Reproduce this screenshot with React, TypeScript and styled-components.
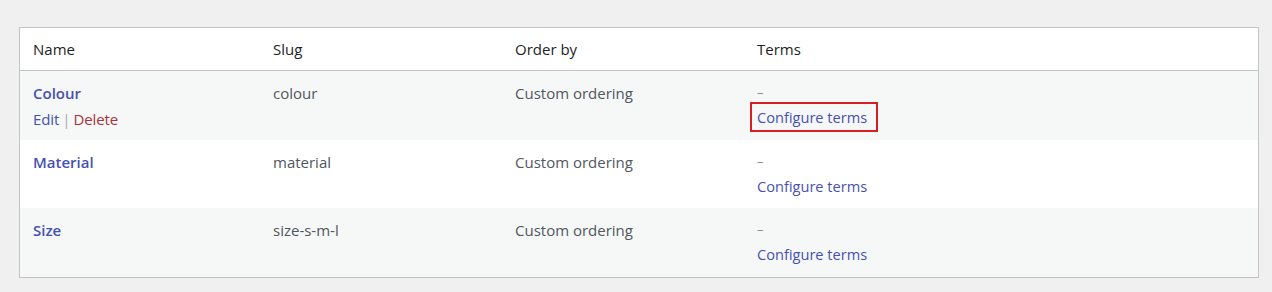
import React from 'react';
import styled, { createGlobalStyle } from 'styled-components';

const GlobalStyle = createGlobalStyle`
  html, body {
    margin: 0;
    padding: 0;
    background: #f0f0f1;
    font-family: 'Open Sans', 'Noto Sans', sans-serif;
  }
`;

interface Attribute {
  name: string;
  slug: string;
  orderBy: string;
  highlight?: boolean;
  actions?: boolean;
}

const attributes: Attribute[] = [
  { name: 'Colour', slug: 'colour', orderBy: 'Custom ordering', highlight: true, actions: true },
  { name: 'Material', slug: 'material', orderBy: 'Custom ordering' },
  { name: 'Size', slug: 'size-s-m-l', orderBy: 'Custom ordering' },
];

function App(): JSX.Element {
  return (
    <>
      <GlobalStyle />
      <Page>
        <Table>
          <HeadRow>
            <HeadCell>Name</HeadCell>
            <HeadCell>Slug</HeadCell>
            <HeadCell>Order by</HeadCell>
            <HeadCell>Terms</HeadCell>
          </HeadRow>
          {attributes.map((el, idx) => (
            <Row key={el.slug} alt={idx % 2 === 0}>
              <Cell>
                <NameLink>{el.name}</NameLink>
                {el.actions && (
                  <Actions>
                    <ActionLink>Edit</ActionLink>
                    <Sep>|</Sep>
                    <ActionLink danger>Delete</ActionLink>
                  </Actions>
                )}
              </Cell>
              <Cell>{el.slug}</Cell>
              <Cell>{el.orderBy}</Cell>
              <Cell>
                <Dash>–</Dash>
                <TermsLink highlight={el.highlight}>Configure terms</TermsLink>
              </Cell>
            </Row>
          ))}
        </Table>
      </Page>
    </>
  );
}

const Page = styled.div`
  padding: 27px 13px 15px 19px;
`;

const Table = styled.div`
  border: 1px solid #c3c4c7;
  background: #fff;
`;

const HeadRow = styled.div`
  display: grid;
  grid-template-columns: 240px 242px 242px 1fr;
  height: 42px;
  align-items: center;
  border-bottom: 1px solid #c3c4c7;
`;

const HeadCell = styled.div`
  padding-left: 13px;
  font-size: 15px;
  color: #1d2327;
`;

const Row = styled.div<{ alt: boolean }>`
  display: grid;
  grid-template-columns: 240px 242px 242px 1fr;
  height: 68.7px;
  background: ${({ alt }) => (alt ? '#f6f7f7' : '#fff')};
`;

const Cell = styled.div`
  padding: 11px 0 0 13px;
  font-size: 15px;
  line-height: 22px;
  color: #50575e;
  display: flex;
  flex-direction: column;
  align-items: flex-start;
`;

const NameLink = styled.span`
  color: #4651b1;
  font-weight: 600;
`;

const Actions = styled.div`
  display: flex;
  gap: 3px;
  margin-top: 4px;
  letter-spacing: -0.1px;
`;

const ActionLink = styled.span<{ danger?: boolean }>`
  color: ${({ danger }) => (danger ? '#a7333b' : '#4651b1')};
`;

const Sep = styled.span`
  color: #a7aaad;
`;

const Dash = styled.span`
  color: #8c8f94;
  font-size: 13px;
  line-height: 21px;
`;

const TermsLink = styled.span<{ highlight?: boolean }>`
  color: #4651b1;
  font-size: 14.6px;
  margin-left: -7px;
  padding: 2px 9px 2px 5px;
  margin-top: -1px;
  border: 2px solid ${({ highlight }) => (highlight ? '#d81e24' : 'transparent')};
`;

export default App;
